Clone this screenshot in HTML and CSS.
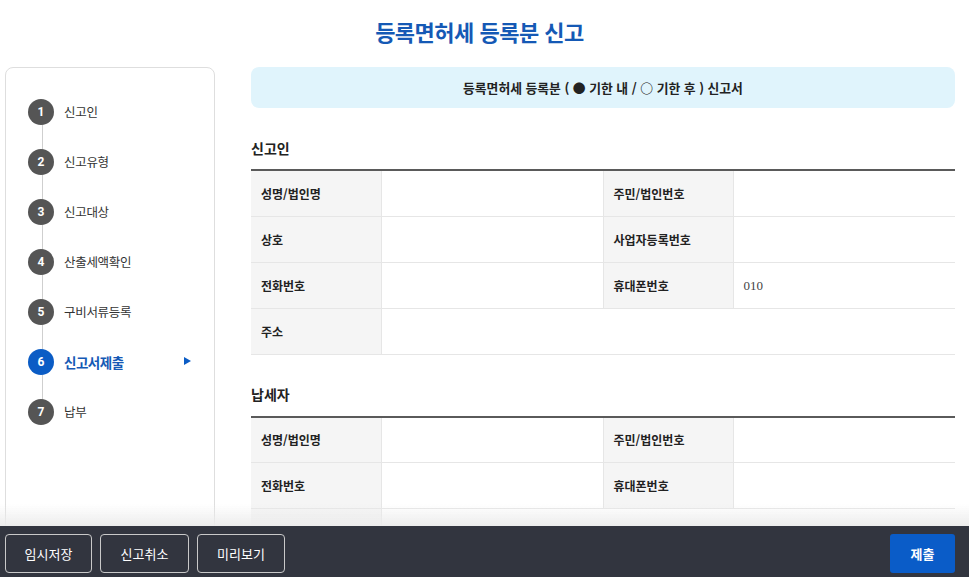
FILE: index.html
```html
<!DOCTYPE html>
<html lang="ko">
<head>
  <meta charset="UTF-8">
  <meta name="viewport" content="width=device-width, initial-scale=1">
  <title>등록면허세 등록분 신고</title>
  <link rel="stylesheet" href="styles.css">
</head>
<body>
  <header class="page-title">
    <h1>등록면허세 등록분 신고</h1>
  </header>

  <div class="layout">
    <aside class="steps">
      <ol>
        <li><span class="num">1</span><span class="label">신고인</span></li>
        <li><span class="num">2</span><span class="label">신고유형</span></li>
        <li><span class="num">3</span><span class="label">신고대상</span></li>
        <li><span class="num">4</span><span class="label">산출세액확인</span></li>
        <li><span class="num">5</span><span class="label">구비서류등록</span></li>
        <li class="active"><span class="num">6</span><span class="label">신고서제출</span><span class="arrow"></span></li>
        <li><span class="num">7</span><span class="label">납부</span></li>
      </ol>
    </aside>

    <main class="content">
      <div class="banner">등록면허세 등록분 ( ● 기한 내 / ○ 기한 후 ) 신고서</div>

      <section class="block">
        <h2>신고인</h2>
        <table class="info">
          <colgroup>
            <col class="c-label"><col class="c-value"><col class="c-label"><col class="c-value">
          </colgroup>
          <tr>
            <th>성명/법인명</th><td></td>
            <th>주민/법인번호</th><td></td>
          </tr>
          <tr>
            <th>상호</th><td></td>
            <th>사업자등록번호</th><td></td>
          </tr>
          <tr>
            <th>전화번호</th><td></td>
            <th>휴대폰번호</th><td><span class="phone">010</span></td>
          </tr>
          <tr>
            <th>주소</th><td colspan="3"></td>
          </tr>
        </table>
      </section>

      <section class="block">
        <h2>납세자</h2>
        <table class="info">
          <colgroup>
            <col class="c-label"><col class="c-value"><col class="c-label"><col class="c-value">
          </colgroup>
          <tr>
            <th>성명/법인명</th><td></td>
            <th>주민/법인번호</th><td></td>
          </tr>
          <tr>
            <th>전화번호</th><td></td>
            <th>휴대폰번호</th><td></td>
          </tr>
          <tr>
            <th>주소</th><td colspan="3"></td>
          </tr>
        </table>
      </section>
    </main>
  </div>

  <footer class="actions">
    <div class="left">
      <button class="ghost w87">임시저장</button>
      <button class="ghost w89">신고취소</button>
      <button class="ghost w88">미리보기</button>
    </div>
    <button class="submit">제출</button>
  </footer>
</body>
</html>
```

FILE: styles.css
```css
*, *::before, *::after {
  box-sizing: border-box;
}

body {
  margin: 0;
  font-family: "Noto Sans CJK KR", "Noto Sans", sans-serif;
  color: #222;
  background: #fff;
}

/* 제목 */
.page-title {
  height: 67px;
  padding: 14px 10px 0 0;
  text-align: center;
}

.page-title h1 {
  margin: 0;
  font-size: 22px;
  line-height: 34px;
  font-weight: 700;
  color: #1559b5;
  letter-spacing: -0.5px;
}

.layout {
  display: flex;
  align-items: flex-start;
  gap: 36px;
  padding: 0 14px 0 5px;
}

/* 단계 목록 */
.steps {
  width: 210px;
  height: 500px;
  flex-shrink: 0;
  border: 1px solid #dedede;
  border-radius: 8px;
  padding-top: 31px;
}

.steps ol {
  position: relative;
  list-style: none;
  margin: 0;
  padding: 0 0 0 22px;
}

.steps ol::before {
  content: "";
  position: absolute;
  left: 36px;
  top: 13px;
  bottom: 37px;
  width: 1px;
  background: #cfcfcf;
}

.steps li {
  display: flex;
  align-items: flex-start;
  height: 50px;
}

.num {
  width: 26px;
  height: 26px;
  border-radius: 50%;
  background: #555;
  color: #fff;
  font-family: Roboto, "Noto Sans", sans-serif;
  font-weight: 700;
  font-size: 12px;
  display: flex;
  align-items: center;
  justify-content: center;
  position: relative;
  z-index: 1;
  flex-shrink: 0;
}

.label {
  margin-left: 10px;
  font-size: 12.5px;
  line-height: 26px;
  color: #333;
  letter-spacing: -0.3px;
}

.active .num {
  background: #0b5cc5;
}

.active .label {
  font-size: 13.5px;
  font-weight: 700;
  color: #1559b5;
  letter-spacing: -0.5px;
}

.arrow {
  margin-left: auto;
  margin-right: 23px;
  margin-top: 8px;
  width: 0;
  height: 0;
  border-top: 4.5px solid transparent;
  border-bottom: 4.5px solid transparent;
  border-left: 7px solid #0b5cc5;
}

/* 본문 */
.content {
  flex: 1;
  min-width: 0;
}

.banner {
  height: 41px;
  background: #e0f4fc;
  border-radius: 8px;
  display: flex;
  align-items: center;
  justify-content: center;
  font-size: 12.8px;
  font-weight: 700;
  color: #222;
}

.block h2 {
  margin: 30px 0 0;
  padding-bottom: 11px;
  font-size: 14px;
  line-height: 20px;
  font-weight: 700;
  color: #222;
}

.block + .block h2 {
  margin-top: 29px;
  padding-bottom: 12px;
}

.info {
  width: 100%;
  border-collapse: collapse;
  table-layout: fixed;
  border-top: 2px solid #5a5a5a;
}

.c-label { width: 130px; }
.c-value { width: 222px; }

.info th,
.info td {
  height: 46px;
  border-bottom: 1px solid #e6e6e6;
  border-left: 1px solid #e6e6e6;
  font-size: 12px;
  padding: 0 10px;
}

.info th:first-child {
  border-left: none;
}

.info th {
  background: #f5f5f5;
  text-align: left;
  font-weight: 700;
  color: #222;
}

.info td {
  background: #fff;
}

.phone {
  font-family: "Liberation Serif", serif;
  font-size: 13px;
  color: #444;
}

/* 하단 버튼 */
.actions {
  position: fixed;
  left: 0;
  right: 0;
  bottom: 0;
  height: 51px;
  background: #32353f;
  display: flex;
  justify-content: space-between;
  align-items: flex-start;
  padding: 8px 14px 0 5px;
}

.actions::before {
  content: "";
  position: absolute;
  left: 0;
  right: 0;
  top: -22px;
  height: 22px;
  background: linear-gradient(rgba(255, 255, 255, 0), rgba(236, 236, 236, 0.95));
}

.left {
  display: flex;
  gap: 8px;
}

.actions button {
  height: 39px;
  font-family: "Noto Sans CJK KR", sans-serif;
  font-size: 13px;
  color: #fff;
  cursor: pointer;
}

.ghost {
  background: transparent;
  border: 1px solid #c9c9c9;
  border-radius: 4px;
}

.w87 { width: 87px; }
.w89 { width: 89px; }
.w88 { width: 88px; }

.submit {
  width: 65px;
  background: #0a5cc8;
  border: none;
  border-radius: 3px;
  font-weight: 700;
}
```
